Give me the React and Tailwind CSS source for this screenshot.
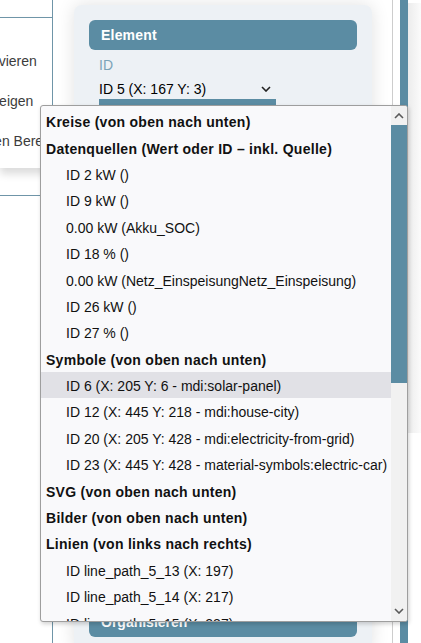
import React from "react";

const rows = [
  { t: "Kreise (von oben nach unten)", g: true },
  { t: "Datenquellen (Wert oder ID – inkl. Quelle)", g: true },
  { t: "ID 2 kW ()" },
  { t: "ID 9 kW ()" },
  { t: "0.00 kW (Akku_SOC)" },
  { t: "ID 18 % ()" },
  { t: "0.00 kW (Netz_EinspeisungNetz_Einspeisung)" },
  { t: "ID 26 kW ()" },
  { t: "ID 27 % ()" },
  { t: "Symbole (von oben nach unten)", g: true },
  { t: "ID 6 (X: 205 Y: 6 - mdi:solar-panel)", h: true },
  { t: "ID 12 (X: 445 Y: 218 - mdi:house-city)" },
  { t: "ID 20 (X: 205 Y: 428 - mdi:electricity-from-grid)" },
  { t: "ID 23 (X: 445 Y: 428 - material-symbols:electric-car)" },
  { t: "SVG (von oben nach unten)", g: true },
  { t: "Bilder (von oben nach unten)", g: true },
  { t: "Linien (von links nach rechts)", g: true },
  { t: "ID line_path_5_13 (X: 197)" },
  { t: "ID line_path_5_14 (X: 217)" },
  { t: "ID line_path_5_15 (X: 237)" },
];

function Chevron({ up, className }) {
  return (
    <svg width="10" height="6" viewBox="0 0 10 6" className={className}>
      <polyline
        points={up ? "1,5 5,1 9,5" : "1,1 5,5 9,1"}
        fill="none"
        stroke="currentColor"
        strokeWidth="1.6"
      />
    </svg>
  );
}

export default function App() {
  return (
    <div className="relative w-[421px] h-[643px] overflow-hidden bg-white font-['Liberation_Sans',sans-serif] text-[14px]">
      <div className="flex h-full">
        {/* left column (clipped menu) */}
        <div className="w-[52px] shrink-0 overflow-hidden">
          <div className="h-[17px]" />
          <div className="border-t border-[#6f95a8] bg-white shadow-[0_6px_8px_rgba(0,0,0,0.14)] pt-[23px] pb-[7px] text-[#3c3c3c] whitespace-nowrap">
            <div className="h-[40px] flex items-center -ml-[41px]">Deaktivieren</div>
            <div className="h-[40px] flex items-center -ml-[25px]">Anzeigen</div>
            <div className="h-[40px] flex items-center -ml-[16px]">Den Bereich</div>
          </div>
          <div className="mt-[27px] border-t border-[#6f95a8]" />
        </div>

        {/* main container */}
        <div className="w-[341px] shrink-0 border-l border-l-[#6f95a8] border-r border-r-[#cdcdcd] pl-[21px] pr-[20px]">
          <div className="mt-[5px] w-[298px] rounded-[8px] bg-[#edf1f5] p-[15px] shadow-[0_0_18px_rgba(0,0,0,0.12)]">
            <div className="h-[30px] rounded-[6px] bg-[#5b8ca3] pl-[12px] flex items-center text-white font-bold text-[14px] tracking-[0.2px]">
              Element
            </div>
            <div className="mt-[6px] pl-[10px] h-[18px] flex items-center text-[#7ba3b8]">ID</div>
            <div className="ml-[10px] mt-[5px] w-[177px] h-[20px] flex items-center justify-between pr-[5px] text-black">
              <span>ID 5 (X: 167 Y: 3)</span>
              <Chevron className="text-[#222]" />
            </div>
            <div className="ml-[10px] w-[177px] h-[6px] bg-[#5b8ca3]" />
            <div className="mt-[502px] h-[30px] rounded-[6px] bg-[#5b8ca3] pl-[12px] flex items-center text-white font-bold">
              Organisieren
            </div>
          </div>
        </div>

        <div className="w-[7px] shrink-0" />
        <div className="w-[8px] shrink-0 bg-[#5b8ca3]" />
        <div className="flex-1">
          <div className="mt-[3px] h-[430px] bg-gradient-to-r from-[#ececec] to-[#fbfbfb]" />
        </div>
      </div>

      {/* open select dropdown */}
      <div className="absolute left-[40px] top-[105px] w-[368px] h-[517px] flex overflow-hidden rounded-[3px] border border-[#9e9e9e] bg-[#f9f9fb] shadow-[1px_2px_4px_rgba(0,0,0,0.18)]">
        <div className="flex-1 pt-[2px] overflow-hidden">
          {rows.map((r, i) => (
            <div
              key={i}
              className={
                "h-[26.4px] pt-[3px] flex items-center whitespace-nowrap text-[#111] " +
                (r.g ? "pl-[5px] font-bold tracking-[0.28px] " : "pl-[25px] ") +
                (r.h ? "bg-[#e1e1e6]" : "")
              }
            >
              {r.t}
            </div>
          ))}
        </div>
        <div className="w-[16px] shrink-0 bg-[#f1f1f1] flex flex-col">
          <div className="h-[19px] flex items-center justify-center text-[#5a5a5a]">
            <Chevron up />
          </div>
          <div className="h-[258px] bg-[#5b8ca3]" />
          <div className="flex-1" />
          <div className="h-[21px] flex items-center justify-center text-[#5a5a5a]">
            <Chevron />
          </div>
        </div>
      </div>
    </div>
  );
}
